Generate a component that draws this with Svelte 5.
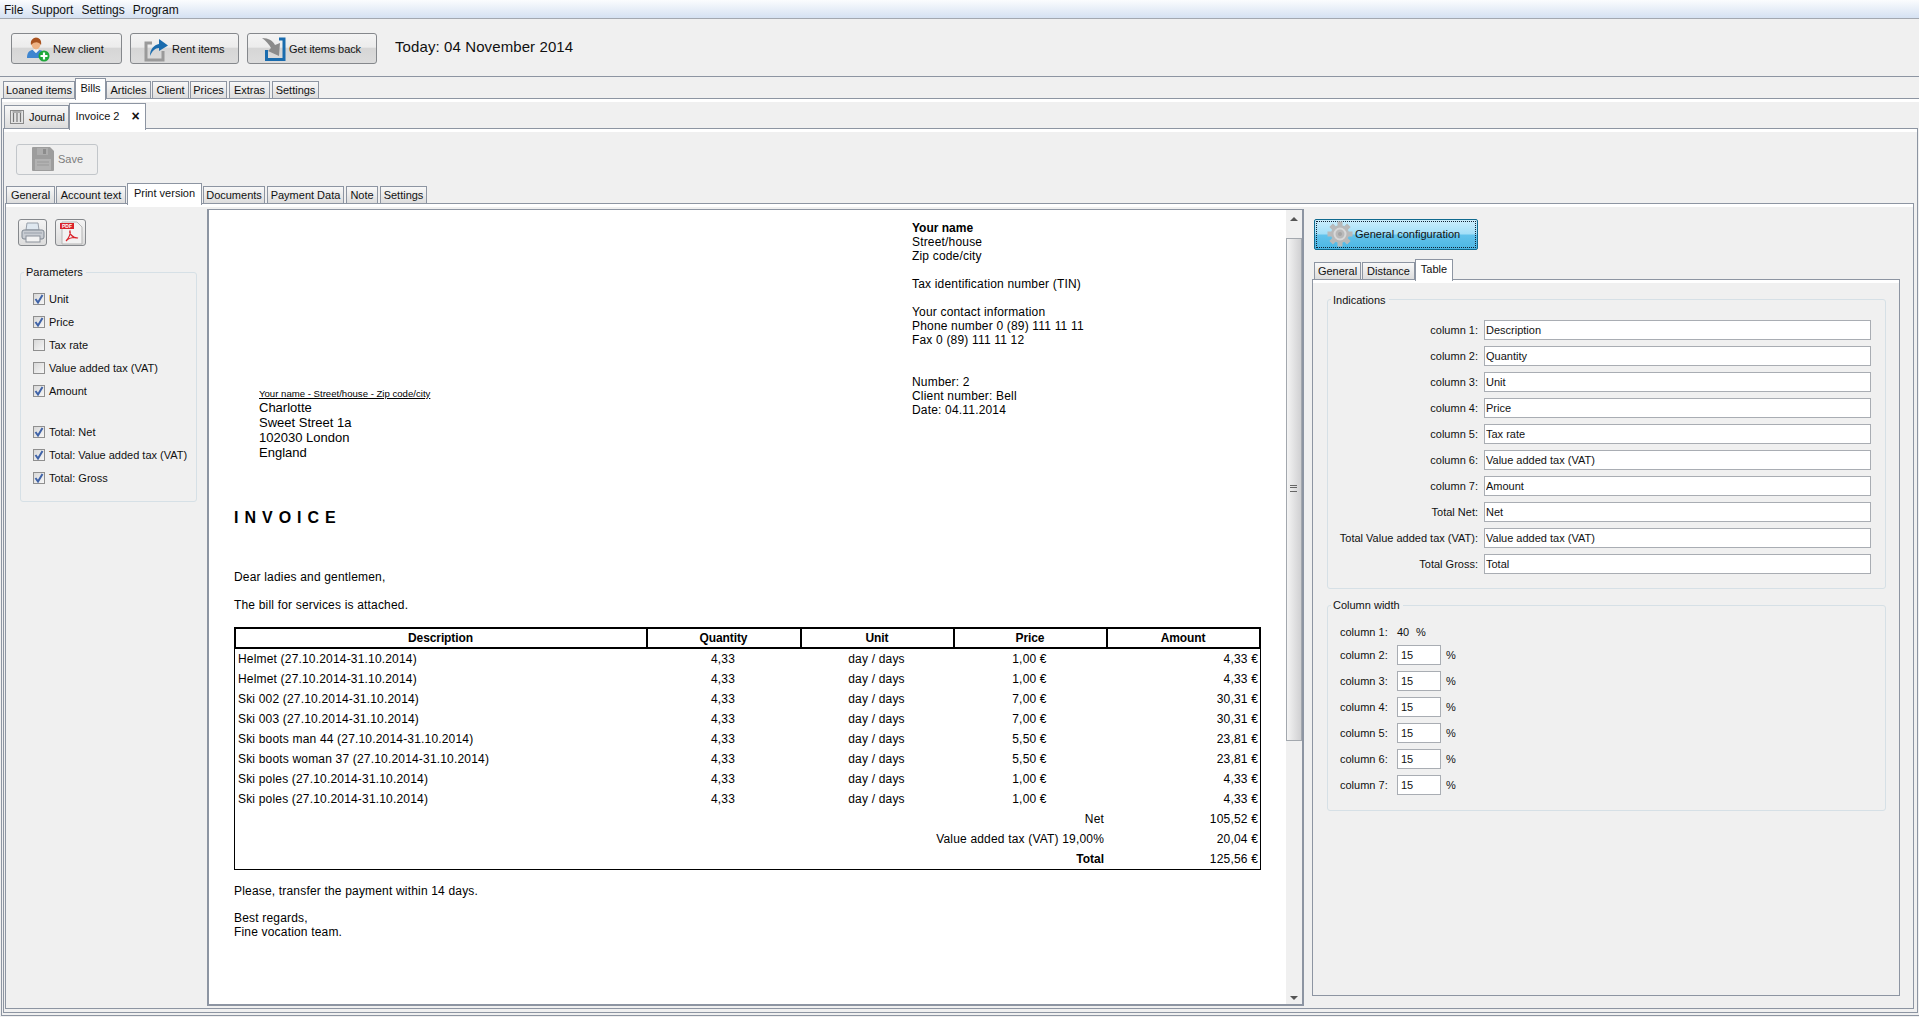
<script>
  const menu = ['File', 'Support', 'Settings', 'Program'];
  const mainTabs = ['Loaned items', 'Bills', 'Articles', 'Client', 'Prices', 'Extras', 'Settings'];
  const docTabs = ['General', 'Account text', 'Print version', 'Documents', 'Payment Data', 'Note', 'Settings'];
  const params = [
    { label: 'Unit', on: true },
    { label: 'Price', on: true },
    { label: 'Tax rate', on: false },
    { label: 'Value added tax (VAT)', on: false },
    { label: 'Amount', on: true }
  ];
  const totals = ['Total: Net', 'Total: Value added tax (VAT)', 'Total: Gross'];
  const sender = [
    'Street/house', 'Zip code/city', '', 'Tax identification number (TIN)', '',
    'Your contact information', 'Phone number 0 (89) 111 11 11', 'Fax 0 (89) 111 11 12', '', '',
    'Number: 2', 'Client number: Bell', 'Date: 04.11.2014'
  ];
  const recipient = ['Charlotte', 'Sweet Street 1a', '102030 London', 'England'];
  const columns = ['Description', 'Quantity', 'Unit', 'Price', 'Amount'];
  const period = '(27.10.2014-31.10.2014)';
  const items = [
    ['Helmet', '1,00 €', '4,33 €'],
    ['Helmet', '1,00 €', '4,33 €'],
    ['Ski 002', '7,00 €', '30,31 €'],
    ['Ski 003', '7,00 €', '30,31 €'],
    ['Ski boots man 44', '5,50 €', '23,81 €'],
    ['Ski boots woman 37', '5,50 €', '23,81 €'],
    ['Ski poles', '1,00 €', '4,33 €'],
    ['Ski poles', '1,00 €', '4,33 €']
  ];
  const summary = [
    { label: 'Net', value: '105,52 €' },
    { label: 'Value added tax (VAT) 19,00%', value: '20,04 €' },
    { label: 'Total', value: '125,56 €', bold: true }
  ];
  const indications = [
    ['column 1:', 'Description'], ['column 2:', 'Quantity'], ['column 3:', 'Unit'],
    ['column 4:', 'Price'], ['column 5:', 'Tax rate'], ['column 6:', 'Value added tax (VAT)'],
    ['column 7:', 'Amount'], ['Total Net:', 'Net'], ['Total Value added tax (VAT):', 'Value added tax (VAT)'],
    ['Total Gross:', 'Total']
  ];
  const widths = [2, 3, 4, 5, 6, 7];
</script>

{#snippet check(on)}
  <span class="box">
    {#if on}
      <svg width="10" height="10" viewBox="0 0 10 10"><path d="M1.5 5 L4 8.5 L8.5 1" fill="none" stroke="#3f63a8" stroke-width="2"/></svg>
    {/if}
  </span>
{/snippet}

<div class="app">
  <div class="menubar">
    {#each menu as m}<span>{m}</span>{/each}
  </div>

  <div class="toolbar">
    <button class="tool new">
      <svg width="26" height="26" viewBox="0 0 26 26">
        <path d="M3 22 C3 16 6 14 9 14 L12 17 L15 14 C19 14 21 17 21 22 Z" fill="#3f86d0"/>
        <path d="M9 14 L12 17 L15 14 L12 12 Z" fill="#eef3f8"/>
        <ellipse cx="12" cy="7.5" rx="4.5" ry="6" fill="#eeb284"/>
        <path d="M7 9 C5 0 19 -1 17 9 C15 6 11 5 7 9 Z" fill="#a8521f"/>
        <circle cx="20" cy="20" r="5.5" fill="#1fa83a"/>
        <path d="M20 16.5 V23.5 M16.5 20 H23.5" stroke="#fff" stroke-width="2.2"/>
      </svg>
      <span>New client</span>
    </button>
    <button class="tool rent">
      <svg width="26" height="26" viewBox="0 0 26 26">
        <path d="M9 7 H3 V24 H20 V15" fill="none" stroke="#9a9a9a" stroke-width="3"/>
        <path d="M7 20 C7 13 11 9 16 8 V3 L25 9.5 L16 15 V12 C12 12 9 15 7 20 Z" fill="#1a6cae"/>
      </svg>
      <span>Rent items</span>
    </button>
    <button class="tool back">
      <svg width="26" height="26" viewBox="0 0 26 26">
        <path d="M6.5 14 V23.5 H24 V3 H19" fill="none" stroke="#1a6cae" stroke-width="3"/>
        <path d="M2 2 C9 2 13 5 15 9 L20 7 L19 20 L8 15 L11 12 C9 8 6 5 2 2 Z" fill="#8b8b8b"/>
      </svg>
      <span>Get items back</span>
    </button>
    <div class="today">Today: 04 November 2014</div>
  </div>

  <div class="tabs main-tabs">
    {#each mainTabs as t}
      <div class="tab" class:active={t === 'Bills'}>{t}</div>
    {/each}
  </div>

  <div class="panel p1">
    <div class="tabs sub-tabs">
      <div class="tab journal">
        <svg width="14" height="14" viewBox="0 0 14 14">
          <rect x="0.5" y="0.5" width="13" height="13" fill="#e4e4e4" stroke="#8a8a8a"/>
          <path d="M2.5 2 H11.5 M3.5 3 V12 M7 3 V12 M10.5 3 V12" stroke="#777" stroke-width="1.2"/>
        </svg>
        Journal
      </div>
      <div class="tab active invoice">Invoice 2 <span class="close">×</span></div>
    </div>

    <div class="panel p2">
      <button class="save">
        <svg width="22" height="24" viewBox="0 0 22 24">
          <path d="M0 1 Q0 0 1 0 H18 L22 4 V23 Q22 24 21 24 H1 Q0 24 0 23 Z" fill="#9d9d9d"/>
          <rect x="5" y="1" width="11" height="7" fill="#acacac"/>
          <rect x="11" y="2" width="3" height="5" fill="#8c8c8c"/>
          <rect x="3" y="12" width="16" height="11" fill="#b2b2b2"/>
          <path d="M5 15 H17 M5 18 H17" stroke="#9a9a9a"/>
        </svg>
        <span>Save</span>
      </button>

      <div class="tabs doc-tabs">
        {#each docTabs as t}
          <div class="tab" class:active={t === 'Print version'}>{t}</div>
        {/each}
      </div>

      <div class="panel p3">
        <aside class="sidebar">
          <div class="icons">
            <button class="icon-btn">
              <svg width="24" height="22" viewBox="0 0 24 22">
                <path d="M6 1 H17 L18 8 H5 Z" fill="#dfe8f0" stroke="#98a0aa"/>
                <rect x="1" y="8" width="22" height="9" rx="2" fill="#c8ccd2" stroke="#7f8791"/>
                <rect x="5" y="14" width="14" height="6" fill="#f2f2f2" stroke="#8a9099"/>
                <path d="M3 11 H21" stroke="#9aa1ab"/>
              </svg>
            </button>
            <button class="icon-btn">
              <svg width="26" height="24" viewBox="0 0 26 24">
                <path d="M4 1 H19 L24 6 V23 H4 Z" fill="#f2f2f2" stroke="#b5b5b5"/>
                <rect x="2" y="2" width="14" height="6" fill="#d9222a"/>
                <text x="9" y="7" text-anchor="middle" class="pdf">PDF</text>
                <path d="M8 20 C11 17 13 12 12 10 C11 12 14 17 20 17 C16 16 11 17 8 20 Z" fill="none" stroke="#d9222a" stroke-width="1.2"/>
              </svg>
            </button>
          </div>

          <div class="group params">
            <span class="legend">Parameters</span>
            {#each params as p}
              <div class="check">{@render check(p.on)}<span>{p.label}</span></div>
            {/each}
            <div class="spacer"></div>
            {#each totals as t}
              <div class="check">{@render check(true)}<span>{t}</span></div>
            {/each}
          </div>
        </aside>

        <div class="viewer">
          <div class="paper">
            <div class="head">
              <div class="address">
                <div class="return">Your name - Street/house - Zip code/city</div>
                {#each recipient as line}<div>{line}</div>{/each}
              </div>
              <div class="sender">
                <div class="line"><b>Your name</b></div>
                {#each sender as line}<div class="line">{line}</div>{/each}
              </div>
            </div>

            <div class="doc-body">
              <h1>INVOICE</h1>
              <p class="dear">Dear ladies and gentlemen,</p>
              <p class="attached">The bill for services is attached.</p>

              <div class="table">
                <div class="thead">
                  {#each columns as c}<div>{c}</div>{/each}
                </div>
                <div class="tbody">
                  {#each items as it}
                    <div class="row">
                      <div class="name">{it[0]} {period}</div>
                      <div class="mid">4,33</div>
                      <div class="mid">day / days</div>
                      <div class="mid">{it[1]}</div>
                      <div class="right">{it[2]}</div>
                    </div>
                  {/each}
                  {#each summary as s}
                    <div class="row" class:bold={s.bold}>
                      <div class="sum-label">{s.label}</div>
                      <div class="right sum-value">{s.value}</div>
                    </div>
                  {/each}
                </div>
              </div>

              <p class="please">Please, transfer the payment within 14 days.</p>
              <p class="regards">Best regards,<br />Fine vocation team.</p>
            </div>
          </div>

          <div class="scrollbar">
            <div class="arrow up"></div>
            <div class="thumb"><span class="grip"></span></div>
            <div class="track"></div>
            <div class="arrow down"></div>
          </div>
        </div>

        <section class="config">
          <button class="general">
            <span class="dots">
              <svg width="26" height="26" viewBox="0 0 26 26">
                <g fill="#b9b9b9">
                  <circle cx="13" cy="13" r="9"/>
                  {#each [0, 45, 90, 135, 180, 225, 270, 315] as a}
                    <rect x="10.5" y="0.5" width="5" height="6" transform="rotate({a} 13 13)"/>
                  {/each}
                </g>
                <circle cx="13" cy="13" r="5.5" fill="none" stroke="#d8d8d8" stroke-width="2"/>
                <circle cx="13" cy="13" r="2" fill="#a5a5a5"/>
              </svg>
              General configuration
            </span>
          </button>

          <div class="tabs cfg-tabs">
            <div class="tab">General</div>
            <div class="tab">Distance</div>
            <div class="tab active">Table</div>
          </div>

          <div class="panel p4">
            <div class="group indications">
              <span class="legend">Indications</span>
              {#each indications as row}
                <label for={row[0]}>{row[0]}</label>
                <input id={row[0]} value={row[1]} readonly />
              {/each}
            </div>

            <div class="group col-width">
              <span class="legend">Column width</span>
              <div class="w-row first"><span class="w-label">column 1:</span><span class="forty">40</span><span>%</span></div>
              {#each widths as n}
                <div class="w-row">
                  <span class="w-label">column {n}:</span>
                  <input value="15" readonly />
                  <span class="pct">%</span>
                </div>
              {/each}
            </div>
          </div>
        </section>
      </div>
    </div>
  </div>
</div>

<style>
  :global(body) {
    margin: 0;
    background: #f0f0f0;
  }

  .app {
    width: 1919px;
    height: 1017px;
    overflow: hidden;
    display: flex;
    flex-direction: column;
    background: #f0f0f0;
    color: #111;
    font: 11px "Liberation Sans", Arial, sans-serif;
  }

  button {
    font: inherit;
    color: inherit;
    padding: 0;
  }

  .menubar {
    height: 19px;
    box-sizing: border-box;
    display: flex;
    align-items: center;
    gap: 8px;
    padding: 1px 4px 0;
    font-size: 12px;
    background: linear-gradient(#fbfcfe, #d5e1f2);
    border-bottom: 1px solid #a3a8b0;
  }

  .toolbar {
    height: 58px;
    box-sizing: border-box;
    display: flex;
    align-items: flex-start;
    gap: 8px;
    padding: 14px 0 0 11px;
    border-bottom: 1px solid #8d95a2;
  }

  .tool {
    height: 31px;
    display: flex;
    align-items: center;
    gap: 3px;
    box-sizing: border-box;
    border: 1px solid #85888c;
    border-radius: 3px;
    background: linear-gradient(#f4f4f4 0%, #ececec 45%, #d6d6d6 50%, #dcdcdc 100%);
  }

  .tool.new { width: 111px; padding-left: 12px; }
  .tool.rent { width: 109px; padding-left: 12px; }
  .tool.back { width: 130px; padding-left: 12px; gap: 3px; letter-spacing: -0.1px; }

  .today {
    margin: 3px 0 0 10px;
    font-size: 15px;
    line-height: 21px;
    letter-spacing: 0.1px;
  }

  .tabs {
    display: flex;
    align-items: flex-end;
    position: relative;
    z-index: 1;
  }

  .tab {
    height: 18px;
    box-sizing: border-box;
    margin-bottom: -1px;
    padding: 0 4px;
    display: flex;
    align-items: center;
    justify-content: center;
    background: linear-gradient(#f8f8f8, #dddddd);
    border: 1px solid #8d95a2;
    white-space: nowrap;
  }

  .tab.active {
    height: 22px;
    margin-bottom: -2px;
    padding-bottom: 4px;
    background: #fff;
    border-bottom: 0;
  }

  .main-tabs {
    margin: 1px 0 0 3px;
    height: 20px;
  }

  .panel {
    box-sizing: border-box;
    border: 1px solid #8d95a2;
    box-shadow: inset 0 3px 0 #fff;
    background: #f0f0f0;
  }

  .p1 {
    flex: 1;
    margin: 0 -2px 1px 1px;
    padding: 4px 1px 2px 1px;
    display: flex;
    flex-direction: column;
    min-height: 0;
  }

  .sub-tabs {
    height: 25px;
    padding-left: 1px;
  }

  .sub-tabs .tab {
    height: 24px;
  }

  .sub-tabs .tab.active {
    height: 27px;
    padding-bottom: 2px;
  }

  .journal {
    width: 65px;
    gap: 5px;
    padding: 0 0 0 2px;
  }

  .invoice {
    width: 77px;
    gap: 12px;
  }

  .close {
    font-weight: 700;
    font-size: 14px;
    line-height: 10px;
  }

  .p2 {
    flex: 1;
    min-height: 0;
    margin-right: 1px;
    padding: 15px 3px 3px 1px;
    display: flex;
    flex-direction: column;
  }

  .save {
    width: 82px;
    height: 31px;
    margin-left: 11px;
    flex: none;
    box-sizing: border-box;
    display: flex;
    align-items: center;
    gap: 4px;
    padding: 0 0 1px 15px;
    border: 1px solid #c2c6ca;
    border-radius: 3px;
    background: #efefef;
    color: #7d7d7d;
  }

  .doc-tabs {
    height: 28px;
    padding-left: 1px;
  }

  .doc-tabs .tab + .tab,
  .main-tabs .tab + .tab {
    margin-left: 1px;
  }

  .doc-tabs .tab:nth-child(1) { width: 49px; }
  .doc-tabs .tab:nth-child(2) { width: 70px; }
  .doc-tabs .tab:nth-child(3) { width: 75px; }
  .doc-tabs .tab:nth-child(4) { width: 62px; }
  .doc-tabs .tab:nth-child(5) { width: 77px; margin-left: 2px; }
  .doc-tabs .tab:nth-child(6) { width: 32px; margin-left: 2px; }
  .doc-tabs .tab:nth-child(7) { width: 47px; margin-left: 2px; }

  .main-tabs .tab:nth-child(1) { width: 72px; }
  .main-tabs .tab:nth-child(2) { width: 31px; margin-left: 0; }
  .main-tabs .tab:nth-child(3) { width: 45px; margin-left: 0; }
  .main-tabs .tab:nth-child(4) { width: 37px; }
  .main-tabs .tab:nth-child(5) { width: 37px; }
  .main-tabs .tab:nth-child(6) { width: 41px; margin-left: 2px; }
  .main-tabs .tab:nth-child(7) { width: 47px; margin-left: 2px; }

  .p3 {
    flex: 1;
    min-height: 0;
    display: flex;
    align-items: stretch;
    padding: 5px 0 2px 0;
  }

  .sidebar {
    width: 201px;
    flex: none;
    padding: 10px 0 0 12px;
    box-sizing: border-box;
  }

  .icons {
    display: flex;
    gap: 8px;
  }

  .icon-btn {
    width: 29px;
    height: 27px;
    box-sizing: border-box;
    display: flex;
    align-items: center;
    justify-content: center;
    border: 1px solid #85888c;
    border-radius: 3px;
    background: linear-gradient(#f4f4f4, #dcdcdc);
  }

  .icon-btn + .icon-btn {
    width: 31px;
  }

  .pdf {
    font: 700 5px "Liberation Sans", Arial, sans-serif;
    fill: #fff;
  }

  .group {
    position: relative;
    box-sizing: border-box;
    border: 1px solid #d6e0e6;
    border-radius: 3px;
  }

  .legend {
    position: absolute;
    top: -8px;
    left: 3px;
    padding: 0 3px 0 2px;
    line-height: 14px;
    background: #f0f0f0;
  }

  .indications .legend {
    top: -7px;
  }

  .params {
    width: 177px;
    height: 230px;
    margin: 26px 0 0 2px;
    padding: 14px 0 0 12px;
  }

  .check {
    height: 23px;
    display: flex;
    align-items: center;
    gap: 4px;
  }

  .spacer {
    height: 18px;
  }

  .box {
    width: 12px;
    height: 12px;
    flex: none;
    box-sizing: border-box;
    display: flex;
    align-items: center;
    justify-content: center;
    border: 1px solid #8f8f8f;
    background: linear-gradient(135deg, #d8d8d8, #f6f6f6);
  }

  .viewer {
    width: 1097px;
    flex: none;
    box-sizing: border-box;
    display: flex;
    border: 2px solid #8d95a2;
    border-top-width: 1px;
    background: #fff;
  }

  .paper {
    flex: 1;
    padding-top: 11px;
    color: #000;
    font: 12px/14px "Liberation Sans", Arial, sans-serif;
    letter-spacing: 0.18px;
  }

  .head {
    display: flex;
  }

  .address {
    width: 653px;
    flex: none;
    margin-left: 50px;
    padding-top: 167px;
    font-size: 13px;
    line-height: 15px;
    letter-spacing: 0;
  }

  .return {
    font-size: 9.6px;
    line-height: 12px;
    text-decoration: underline;
  }

  .line {
    height: 14px;
  }

  .line b {
    letter-spacing: 0;
  }

  .doc-body {
    padding-left: 25px;
  }

  h1 {
    margin: 48px 0 0;
    font-size: 16px;
    line-height: 20px;
    letter-spacing: 6px;
  }

  p {
    margin: 0;
  }

  .dear { margin-top: 42px; }
  .attached { margin-top: 14px; }
  .please { margin-top: 14px; }
  .regards { margin-top: 13px; }

  .table {
    width: 1027px;
    margin-top: 15px;
  }

  .thead {
    display: grid;
    grid-template-columns: 412px 154px 153px 153px 1fr;
    box-sizing: border-box;
    height: 22px;
    border: 2px solid #000;
    font-weight: 700;
    letter-spacing: -0.1px;
  }

  .thead > div {
    display: flex;
    align-items: center;
    justify-content: center;
    border-right: 2px solid #000;
    margin-left: -1px;
  }

  .thead > div:last-child {
    border-right: 0;
  }

  .tbody {
    border: 1px solid #000;
    border-top: 0;
  }

  .row {
    height: 20px;
    display: grid;
    grid-template-columns: 411px 154px 153px 153px 1fr;
    align-items: center;
  }

  .name {
    padding-left: 3px;
    white-space: nowrap;
  }

  .mid {
    text-align: center;
  }

  .right {
    text-align: right;
    padding-right: 2px;
  }

  .sum-label {
    grid-column: 1 / 5;
    text-align: right;
    padding-right: 2px;
  }

  .bold .sum-label {
    font-weight: 700;
    letter-spacing: 0;
  }

  .scrollbar {
    width: 16px;
    flex: none;
    display: flex;
    flex-direction: column;
    background: #f0f0f0;
  }

  .arrow {
    height: 19px;
    position: relative;
    flex: none;
  }

  .arrow.up {
    height: 28px;
  }

  .arrow::after {
    content: "";
    position: absolute;
    left: 4px;
    width: 0;
    height: 0;
    border-left: 4px solid transparent;
    border-right: 4px solid transparent;
  }

  .arrow.up::after {
    top: 7px;
    border-bottom: 4px solid #555;
  }

  .arrow.down::after {
    bottom: 4px;
    border-top: 4px solid #555;
  }

  .thumb {
    height: 503px;
    flex: none;
    position: relative;
    box-sizing: border-box;
    border: 1px solid #a3a8ae;
    background: linear-gradient(90deg, #f4f4f4, #d0d0d2);
  }

  .grip {
    position: absolute;
    left: 3px;
    right: 4px;
    top: 246px;
    height: 5px;
    border-top: 1px solid #666;
    border-bottom: 1px solid #666;
  }

  .grip::after {
    content: "";
    display: block;
    margin-top: 1px;
    border-top: 1px solid #666;
  }

  .track {
    flex: 1;
  }

  .config {
    flex: 1;
    padding: 10px 0 0 8px;
    display: flex;
    flex-direction: column;
    min-width: 0;
  }

  .general {
    width: 164px;
    height: 31px;
    margin-left: 2px;
    flex: none;
    box-sizing: border-box;
    padding: 1px;
    border: 1px solid #116a8f;
    border-radius: 2px;
    background: linear-gradient(#cdeefc 0%, #a2dff8 48%, #62c3ec 52%, #4db6e3 100%);
  }

  .dots {
    height: 100%;
    box-sizing: border-box;
    display: flex;
    align-items: center;
    gap: 2px;
    padding: 0 0 1px 10px;
    border: 1px dotted #123;
  }

  .cfg-tabs {
    height: 21px;
    margin: 8px 0 0 2px;
    flex: none;
  }

  .cfg-tabs .tab:nth-child(1) { width: 47px; }
  .cfg-tabs .tab:nth-child(2) { width: 53px; margin-left: 1px; }
  .cfg-tabs .tab:nth-child(3) { width: 38px; }

  .p4 {
    width: 588px;
    height: 717px;
    flex: none;
    padding: 19px 0 0 14px;
  }

  .indications {
    width: 559px;
    height: 290px;
    padding: 20px 14px 0 0;
    display: grid;
    grid-template-columns: 150px 1fr;
    grid-auto-rows: 20px;
    gap: 6px;
  }

  label {
    display: flex;
    align-items: center;
    justify-content: flex-end;
    white-space: nowrap;
  }

  input {
    min-width: 0;
    box-sizing: border-box;
    width: 100%;
    height: 20px;
    padding: 0 1px;
    border: 1px solid #a9adb3;
    background: #fff;
    color: #111;
    outline: none;
    font: inherit;
  }

  .col-width {
    width: 559px;
    height: 206px;
    margin-top: 16px;
    padding: 16px 0 0 12px;
  }

  .w-row {
    height: 20px;
    margin-bottom: 6px;
    display: flex;
    align-items: center;
  }

  .w-row.first {
    margin-bottom: 3px;
  }

  .w-label {
    width: 57px;
    flex: none;
  }

  .forty {
    width: 19px;
  }

  .w-row input {
    width: 44px;
    padding-left: 3px;
  }

  .pct {
    margin-left: 5px;
  }
</style>
